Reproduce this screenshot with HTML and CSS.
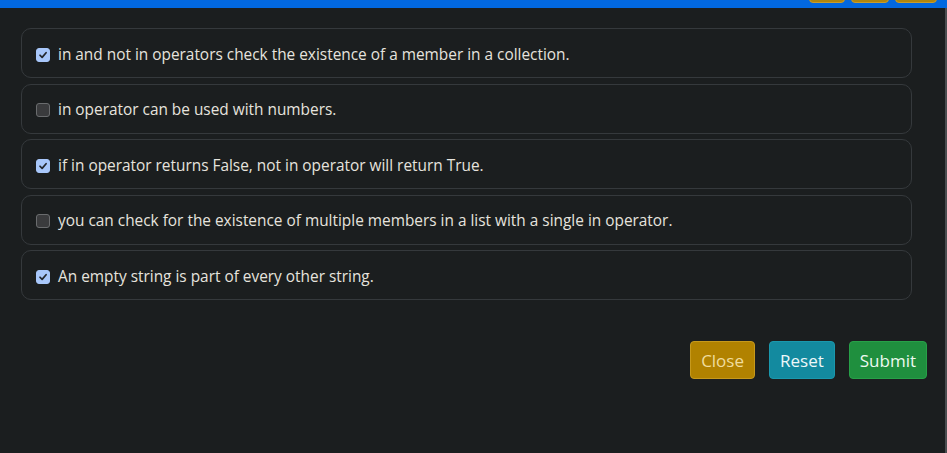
FILE: index.html
```html
<!DOCTYPE html>
<html>
<head>
<meta charset="utf-8">
<link rel="stylesheet" href="styles.css">
</head>
<body>
<div class="topbar">
  <span class="tb-btn tb-a"></span>
  <span class="tb-btn tb-b"></span>
  <span class="tb-btn tb-c"></span>
</div>
<div class="page">
  <div class="list">
    <label class="option"><span class="box checked"><svg viewBox="0 0 14 14" width="14" height="14"><path d="M3.5 7.3 L6 9.8 L10.6 4.4" fill="none" stroke="#23272c" stroke-width="2" stroke-linecap="round" stroke-linejoin="round"/></svg></span><span class="txt">in and not in operators check the existence of a member in a collection.</span></label>
    <label class="option"><span class="box"></span><span class="txt">in operator can be used with numbers.</span></label>
    <label class="option"><span class="box checked"><svg viewBox="0 0 14 14" width="14" height="14"><path d="M3.5 7.3 L6 9.8 L10.6 4.4" fill="none" stroke="#23272c" stroke-width="2" stroke-linecap="round" stroke-linejoin="round"/></svg></span><span class="txt">if in operator returns False, not in operator will return True.</span></label>
    <label class="option"><span class="box"></span><span class="txt">you can check for the existence of multiple members in a list with a single in operator.</span></label>
    <label class="option"><span class="box checked"><svg viewBox="0 0 14 14" width="14" height="14"><path d="M3.5 7.3 L6 9.8 L10.6 4.4" fill="none" stroke="#23272c" stroke-width="2" stroke-linecap="round" stroke-linejoin="round"/></svg></span><span class="txt">An empty string is part of every other string.</span></label>
  </div>
  <div class="actions">
    <button class="btn btn-close">Close</button>
    <button class="btn btn-reset">Reset</button>
    <button class="btn btn-submit">Submit</button>
  </div>
</div>
<div class="edge"></div>
</body>
</html>
```
FILE: styles.css
```css
html, body {
  margin: 0;
  padding: 0;
  background: #1b1e1f;
  height: 100%;
  overflow: hidden;
}
body {
  font-family: "Open Sans", "Noto Sans", sans-serif;
  color: #e4e1dc;
  position: relative;
}
.topbar {
  height: 8px;
  background: #0268e0;
  display: flex;
  justify-content: flex-end;
  gap: 6px;
  padding-right: 10px;
  overflow: hidden;
}
.tb-btn {
  display: block;
  height: 11px;
  margin-top: -8px;
  background: #b0860d;
  border: 1px solid #c89c2a;
  border-radius: 4px;
  box-sizing: border-box;
}
.tb-a { width: 36px; }
.tb-b { width: 38px; }
.tb-c { width: 42px; }
.page {
  padding: 20px 35px 0 21px;
}
.list {
  display: flex;
  flex-direction: column;
  gap: 5.5px;
}
.option {
  display: flex;
  align-items: center;
  height: 50px;
  box-sizing: border-box;
  border: 1px solid #35393c;
  border-radius: 10px;
  padding-left: 14px;
  padding-top: 3px;
  font-size: 15.4px;
  color: #e6e3de;
}
.box {
  width: 14px;
  height: 14px;
  box-sizing: border-box;
  border-radius: 3px;
  background: #3a3b3d;
  border: 1px solid #6a6c6e;
  margin-right: 8px;
  display: flex;
  align-items: center;
  justify-content: center;
  flex: none;
}
.box.checked {
  background: #a8c7fa;
  border-color: #a8c7fa;
}
.box svg { display: block; }
.txt {
  line-height: 20px;
}
.actions {
  display: flex;
  justify-content: flex-end;
  gap: 14px;
  margin-top: 41px;
  margin-right: -15px;
}
.btn {
  height: 38px;
  border-radius: 4px;
  font-family: "Open Sans", "Noto Sans", sans-serif;
  font-size: 17px;
  padding: 0 10px;
  border: 1px solid transparent;
  cursor: pointer;
}
.btn-close {
  background: #b18200;
  border-color: #c6991c;
  color: #f0dd9e;
}
.btn-reset {
  background: #138a9f;
  border-color: #1a98ad;
  color: #eef8fa;
}
.btn-submit {
  background: #1f8f3e;
  border-color: #27a048;
  color: #eefaf1;
}
.edge {
  position: absolute;
  top: 8px;
  right: 0;
  width: 2px;
  bottom: 0;
  background: #4a4d50;
}
```
